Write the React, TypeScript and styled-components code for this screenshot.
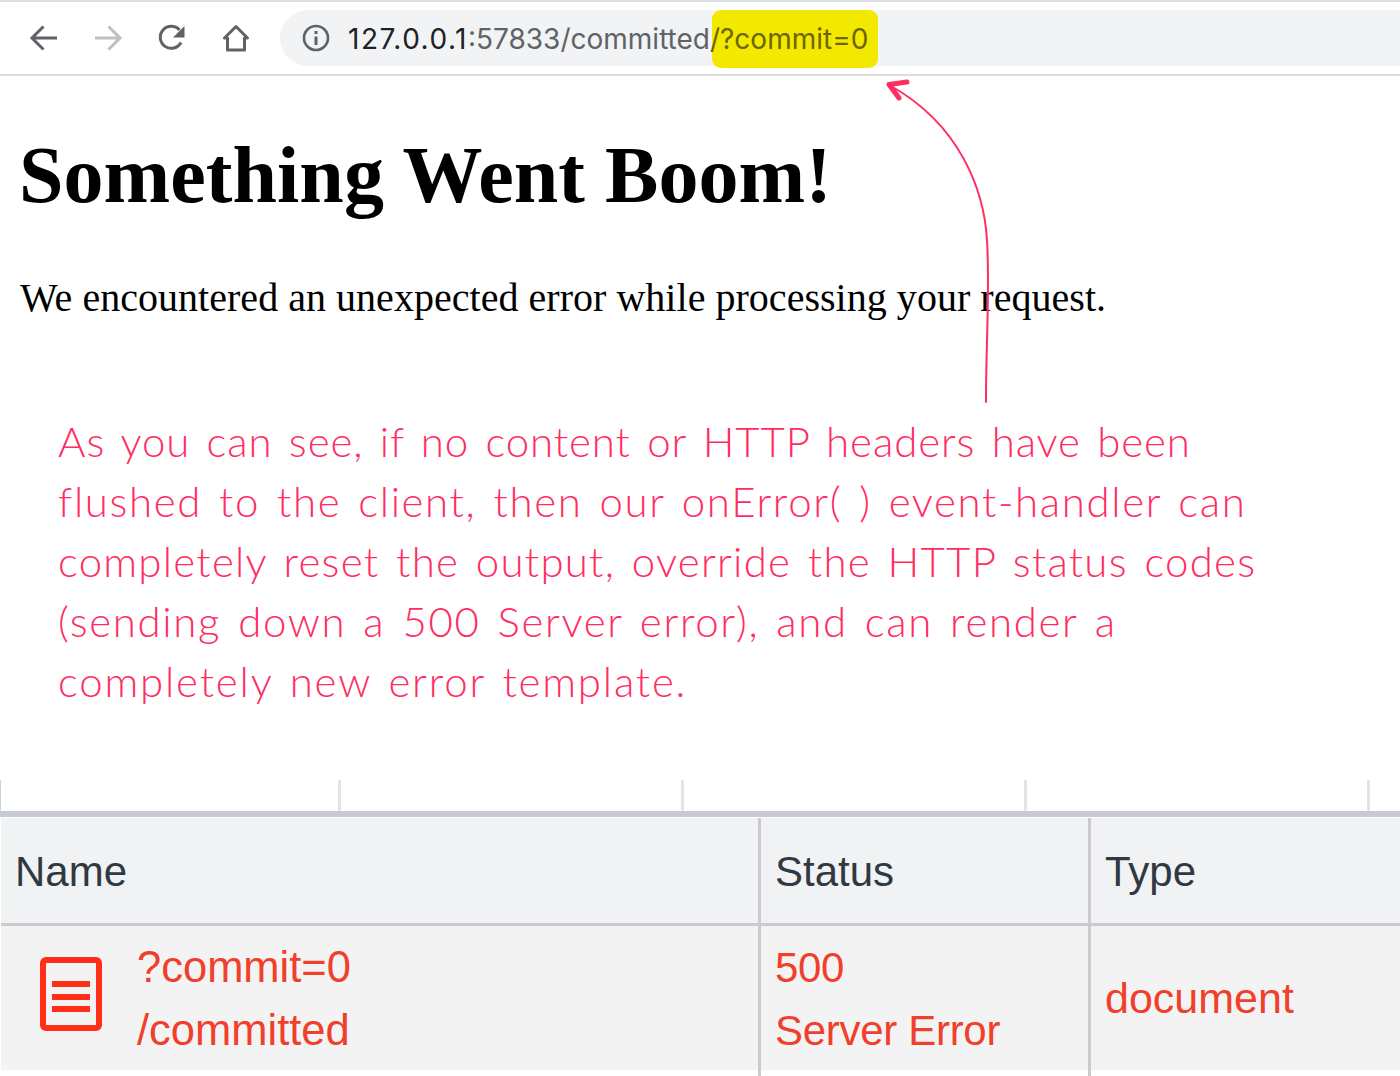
import React from "react"
import styled, { createGlobalStyle } from "styled-components"

const GlobalStyle = createGlobalStyle`
    html, body {
        margin: 0;
        padding: 0;
        background: #fff;
    }
`
const Page = styled.div`
    position: relative;
    width: 1400px;
    height: 1076px;
    overflow: hidden;
    background: #fff;
`
const Toolbar = styled.div`
    display: flex;
    align-items: flex-start;
    height: 64px;
    padding: 8px 0 0 12px;
    border-top: 2px solid #dedfe3;
    border-bottom: 2px solid #dcdcdc;
`
const NavButton = styled.div`
    width: 64px;
    height: 56px;
    display: flex;
    align-items: center;
    justify-content: center;
    svg {
        display: block;
    }
`
const AddressBar = styled.div`
    position: relative;
    flex: 1;
    height: 56px;
    margin-left: 12px;
    padding-left: 22px;
    display: flex;
    align-items: center;
    gap: 18px;
    background: #f1f3f4;
    border-radius: 28px 0 0 28px;
`
const Url = styled.div`
    position: relative;
    z-index: 1;
    padding-top: 2px;
    font-family: "Inter", "Liberation Sans", sans-serif;
    font-size: 28px;
    white-space: nowrap;
    color: #5f6368;
    b {
        font-weight: 400;
        color: #202124;
        letter-spacing: 1.5px;
    }
    em {
        font-style: normal;
        color: #6b6600;
    }
`
const Highlight = styled.div`
    position: absolute;
    left: 432px;
    top: 0;
    width: 166px;
    height: 58px;
    border-radius: 9px;
    background: #f3e800;
`
const Content = styled.div`
    padding: 0 0 0 20px;
    font-family: "Liberation Serif", "Times New Roman", serif;
    color: #000;
`
const Heading = styled.h1`
    margin: 0 0 0 -1px;
    padding-top: 53px;
    font-size: 80px;
    line-height: 92px;
    font-weight: 700;
    letter-spacing: 0.05px;
    white-space: nowrap;
`
const Message = styled.p`
    margin: 0;
    padding-top: 54px;
    font-size: 40px;
    line-height: 46px;
    letter-spacing: 0.03px;
    white-space: nowrap;
`
const Note = styled.div`
    padding: 90px 0 0 58px;
    height: 300px;
    font-family: "Lato", "Noto Sans", sans-serif;
    font-weight: 300;
    font-size: 42px;
    line-height: 60px;
    color: #ff2d62;
`
const NoteLine = styled.div<{ $spacing: number }>`
    white-space: nowrap;
    letter-spacing: ${props => props.$spacing}px;
    word-spacing: 4px;
`
const Ruler = styled.div`
    display: flex;
    height: 31px;
    margin-top: 69px;
`
const Tick = styled.div`
    width: 343px;
    flex: none;
    box-sizing: border-box;
    border-right: 3px solid #e4e4e4;
    &:first-child {
        width: 341px;
        box-shadow: inset 1px 0 0 #c6d4ea;
    }
`
const Divider = styled.div`
    height: 6px;
    background: #c8cad2;
    margin-bottom: 1px;
`
const Table = styled.div`
    display: grid;
    grid-template-columns: 758px 330px 1fr;
    grid-template-rows: 108px 150px;
    font-family: "Liberation Sans", Arial, sans-serif;
    font-size: 42px;
`
const HeadCell = styled.div<{ $first?: boolean }>`
    display: flex;
    align-items: center;
    padding-left: 14px;
    margin-left: ${props => props.$first ? 1 : 0}px;
    padding-top: 2px;
    background: #f1f2f4;
    color: #303942;
    border-left: ${props => props.$first ? "none" : "3px solid #cbcbcf"};
    border-bottom: 3px solid #cbcbcf;
    box-sizing: border-box;
`
const BodyCell = styled.div<{ $first?: boolean }>`
    border-left: ${props => props.$first ? "none" : "3px solid #cbcbcf"};
    margin-left: ${props => props.$first ? 1 : 0}px;
`
const CellInner = styled.div<{ $gap?: number }>`
    height: 144px;
    background: #f3f3f4;
    color: #f0402b;
    display: flex;
    align-items: center;
    padding-left: 14px;
    gap: ${props => props.$gap ?? 0}px;
    box-sizing: border-box;
`
const Stack = styled.div<{ $size: number; $spacing?: number }>`
    display: flex;
    flex-direction: column;
    padding-top: 2px;
    line-height: 63px;
    white-space: nowrap;
    font-size: ${props => props.$size}px;
    letter-spacing: ${props => props.$spacing ?? 0}px;
`
const TypeText = styled.span`
    font-size: 43px;
`
const DocIcon = styled.svg`
    flex: none;
    margin: -8px 0 0 25px;
`
const Arrow = styled.svg`
    position: absolute;
    left: 0;
    top: 0;
    pointer-events: none;
`

const App = () => {
    return (
        <Page>
            <GlobalStyle />
            <Toolbar>
                <NavButton>
                    <svg width="32" height="32" viewBox="0 0 32 32" fill="none" stroke="#5f6368" strokeWidth="3">
                        <path d="M29 16H4M15.500 4.500 4 16l11.500 11.500" />
                    </svg>
                </NavButton>
                <NavButton>
                    <svg width="32" height="32" viewBox="0 0 32 32" fill="none" stroke="#bdc0c2" strokeWidth="3">
                        <path d="M3 16h25M16.500 4.500 28 16 16.500 27.500" />
                    </svg>
                </NavButton>
                <NavButton>
                    <svg width="32" height="32" viewBox="0 0 32 32" fill="none">
                        <path d="M25 20.500A11 11 0 1 1 23.500 8" stroke="#5f6368" strokeWidth="3" />
                        <path d="M28.500 4v11.500H17z" fill="#5f6368" />
                    </svg>
                </NavButton>
                <NavButton>
                    <svg width="32" height="32" viewBox="0 0 32 32" fill="none" stroke="#5f6368" strokeWidth="3" strokeLinejoin="round">
                        <path d="M4.500 16 16 4.500 27.500 16H24.500V28H7.500V16z" />
                    </svg>
                </NavButton>
                <AddressBar>
                    <svg width="28" height="28" viewBox="0 0 28 28" fill="none" stroke="#5f6368">
                        <circle cx="14" cy="14" r="12" strokeWidth="2.600" />
                        <path d="M14 12.500V21" strokeWidth="3" />
                        <path d="M14 7v3" strokeWidth="3" />
                    </svg>
                    <Url><b>127.0.0.1</b>:57833/committed<em>/?commit=0</em></Url>
                    <Highlight />
                </AddressBar>
            </Toolbar>
            <Content>
                <Heading>Something Went Boom!</Heading>
                <Message>We encountered an unexpected error while processing your request.</Message>
            </Content>
            <Note>
                <NoteLine $spacing={0.91}>As you can see, if no content or HTTP headers have been</NoteLine>
                <NoteLine $spacing={1.62}>flushed to the client, then our onError( ) event-handler can</NoteLine>
                <NoteLine $spacing={1.24}>completely reset the output, override the HTTP status codes</NoteLine>
                <NoteLine $spacing={1.65}>(sending down a 500 Server error), and can render a</NoteLine>
                <NoteLine $spacing={1.8}>completely new error template.</NoteLine>
            </Note>
            <Ruler>
                <Tick />
                <Tick />
                <Tick />
                <Tick />
            </Ruler>
            <Divider />
            <Table>
                <HeadCell $first>Name</HeadCell>
                <HeadCell>Status</HeadCell>
                <HeadCell>Type</HeadCell>
                <BodyCell $first>
                    <CellInner $gap={35}>
                        <DocIcon width="62" height="74" viewBox="0 0 62 74" fill="none">
                            <rect x="3" y="3" width="56" height="68" rx="3" stroke="#ff2f17" strokeWidth="6" />
                            <path d="M12 27h38M12 40h38M12 52h38" stroke="#ff2f17" strokeWidth="6" />
                        </DocIcon>
                        <Stack $size={43.5}>
                            <span>?commit=0</span>
                            <span>/committed</span>
                        </Stack>
                    </CellInner>
                </BodyCell>
                <BodyCell>
                    <CellInner>
                        <Stack $size={42} $spacing={-0.3}>
                            <span>500</span>
                            <span>Server Error</span>
                        </Stack>
                    </CellInner>
                </BodyCell>
                <BodyCell>
                    <CellInner><TypeText>document</TypeText></CellInner>
                </BodyCell>
            </Table>
            <Arrow width="1400" height="1076" viewBox="0 0 1400 1076" fill="none" stroke="#ff2d62" strokeLinecap="round" strokeLinejoin="round">
                <path d="M986 402C986 340 990 290 987 240C984 190 960 125 891 86" strokeWidth="2" />
                <path d="M907 82 889 84.500 899 98" strokeWidth="5" />
            </Arrow>
        </Page>
    )
}

export default App
